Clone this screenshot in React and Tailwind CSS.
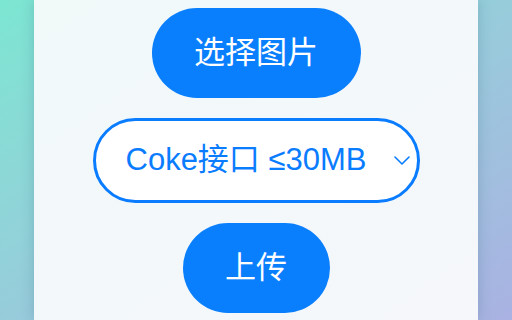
import React, { useState } from 'react';

const App = () => {
  const [api, setApi] = useState('coke');

  return (
    <div
      className="h-[320px] w-[512px] overflow-hidden bg-gradient-to-br from-[#7ce6d2] to-[#a9b1e2] flex justify-center"
      style={{ fontFamily: '"Liberation Sans", "Noto Sans CJK SC", sans-serif' }}
    >
      <div className="w-[444px] h-full bg-gradient-to-br from-[#f1f9f9] to-[#f5f7fb] shadow-[0_0_12px_rgba(40,90,110,0.25)] flex flex-col items-center justify-center gap-5">
        <button className="h-[90px] w-[209px] rounded-full bg-[#0a7ffe] text-white text-[31px] leading-none">
          选择图片
        </button>

        <div className="relative">
          <select
            value={api}
            onChange={(e) => setApi(e.target.value)}
            className="appearance-none h-[85px] w-[327px] rounded-full border-[3px] border-[#0a7cff] bg-white pl-[30px] pr-10 text-[31px] text-[#0a7cff] outline-none"
          >
            <option value="coke">Coke接口 ≤30MB</option>
            <option value="other">备用接口 ≤10MB</option>
          </select>
          <svg
            className="absolute right-[10px] top-[38px] pointer-events-none"
            width="16"
            height="9"
            viewBox="0 0 16 9"
            fill="none"
            stroke="#0a7cff"
            strokeWidth="1.6"
            strokeLinecap="round"
            strokeLinejoin="round"
          >
            <path d="M1 1l7 7 7-7" />
          </svg>
        </div>

        <button className="h-[90px] w-[147px] rounded-full bg-[#0a7ffe] text-white text-[31px] leading-none">
          上传
        </button>
      </div>
    </div>
  );
};

export default App;
